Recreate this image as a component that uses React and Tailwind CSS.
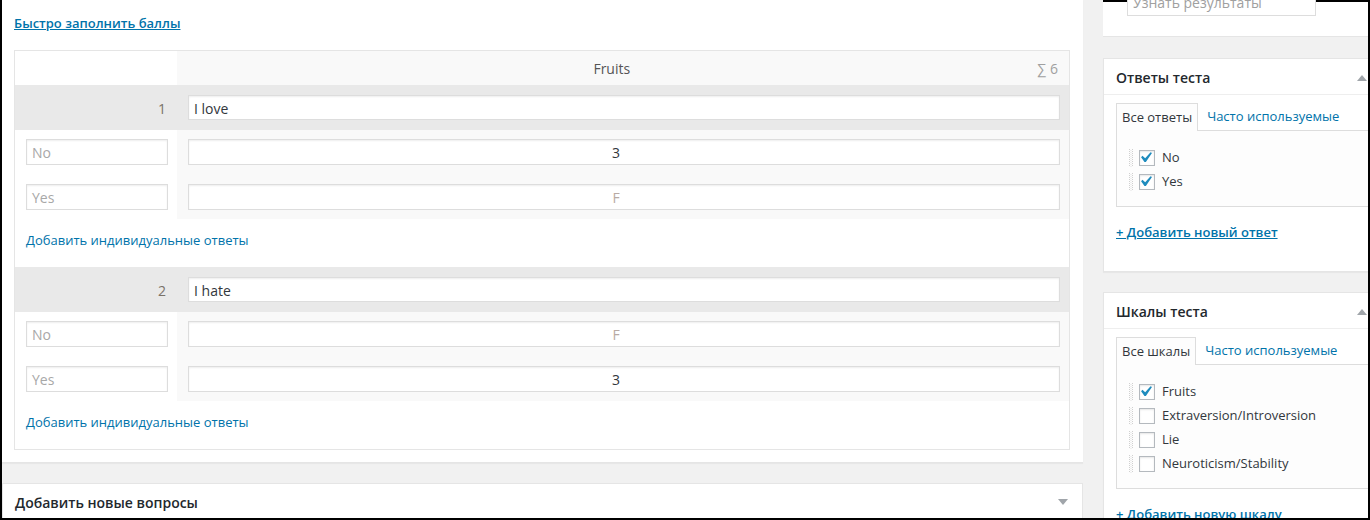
import React from "react";

const font = { fontFamily: '"Open Sans", "Noto Sans", sans-serif' };

function Check() {
  return (
    <svg width="21" height="21" viewBox="0 0 20 20" className="block shrink-0 -ml-[3px] -mt-[2px]">
      <path d="M14.83 4.89l1.34.94-5.81 8.38H9.02L5.78 9.67l1.34-1.25 2.57 2.4z" fill="#1e8cbe" />
    </svg>
  );
}

function Handle() {
  return (
    <svg width="4" height="18" viewBox="0 0 4 18" className="block shrink-0">
      {[0, 2, 4, 6, 8, 10, 12, 14, 16].map((y) => (
        <g key={y}>
          <rect x="0" y={y} width="1" height="1" fill="#d0d0d0" />
          <rect x="3" y={y} width="1" height="1" fill="#d0d0d0" />
          <rect x="1.5" y={y + 1} width="1" height="1" fill="#e2e2e2" />
        </g>
      ))}
    </svg>
  );
}

function Item({ label, checked }) {
  return (
    <div className="flex items-center h-[24px] pl-[12px]">
      <Handle />
      <div className="ml-[6px] w-[16px] h-[16px] shrink-0 border border-[#b4b9be] bg-white shadow-[inset_0_1px_2px_rgba(0,0,0,0.1)] flex items-center justify-center overflow-visible">
        {checked && <Check />}
      </div>
      <span className="ml-[7px] text-[13px] text-[#32373c]">{label}</span>
    </div>
  );
}

function Triangle({ up }) {
  return (
    <div
      className={
        up
          ? "w-0 h-0 border-l-[5px] border-r-[5px] border-b-[6px] border-l-transparent border-r-transparent border-b-[#a0a5aa]"
          : "w-0 h-0 border-l-[5px] border-r-[5px] border-t-[6px] border-l-transparent border-r-transparent border-t-[#a0a5aa]"
      }
    />
  );
}

function SidePanel({ title, tab, items, link, mt }) {
  return (
    <div className={"bg-white border border-[#e5e5e5] shadow-[0_1px_1px_rgba(0,0,0,0.04)] " + mt}>
      <div className="h-[36px] border-b border-[#eeeeee] flex items-center justify-between pl-[12px] pr-[15px] pt-[2px]">
        <span className="text-[14px] font-semibold text-[#23282d]">{title}</span>
        <Triangle up />
      </div>
      <div className="px-[12px] pt-[8px] pb-[29px]">
        <div className="flex items-end">
          <div className="relative z-10 mb-[-1px] border border-[#dddddd] border-b-0 bg-[#fdfdfd] px-[5px] pt-[4px] pb-[4px] text-[13px] leading-[19px] text-[#32373c]">
            {tab}
          </div>
          <div className="ml-[4px] px-[5px] pt-[4px] pb-[4px] text-[13px] leading-[19px] text-[#0073aa]">
            Часто используемые
          </div>
        </div>
        <div className="border border-[#dddddd] bg-[#fdfdfd] pt-[15px] pb-[12px]">
          {items.map((it) => (
            <Item key={it[0]} label={it[0]} checked={it[1]} />
          ))}
        </div>
        <div className="mt-[15px] text-[13px] leading-[20px] font-semibold text-[#0073aa] underline">
          {link}
        </div>
      </div>
    </div>
  );
}

function ValueInput({ value, faded }) {
  return (
    <div
      className={
        "h-[26px] border border-[#dddddd] bg-white shadow-[inset_0_1px_2px_rgba(0,0,0,0.07)] flex items-center justify-center pr-[16px] pt-[1px] text-[14px] " +
        (faded ? "text-[#b8aaa4]" : "text-[#32373c]")
      }
    >
      {value}
    </div>
  );
}

function LabelInput({ text }) {
  return (
    <div className="h-[26px] w-[142px] border border-[#dddddd] bg-white shadow-[inset_0_1px_2px_rgba(0,0,0,0.07)] flex items-center pl-[5px] pt-[1px] text-[14px] text-[#a8a8a8]">
      {text}
    </div>
  );
}

function Question({ n, text, answers }) {
  return (
    <div>
      <div className="flex h-[45px] bg-[#e9e9e9]">
        <div className="w-[162px] shrink-0 flex items-center justify-end pr-[11px] pt-[1px] text-[14px] text-[#7a7268]">
          {n}
        </div>
        <div className="flex-1 pl-[11px] pr-[9px] pt-[10px]">
          <div className="h-[25px] border border-[#dddddd] bg-white shadow-[inset_0_1px_2px_rgba(0,0,0,0.07)] flex items-center pl-[5px] pt-[1px] text-[14px] text-[#32373c]">
            {text}
          </div>
        </div>
      </div>
      <div className="flex">
        <div className="w-[162px] shrink-0 pl-[11px] pt-[9px] pb-[9px] flex flex-col gap-[19px] bg-white">
          {answers.map((a) => (
            <LabelInput key={a[0]} text={a[0]} />
          ))}
        </div>
        <div className="flex-1 bg-[#f9f9f9] pl-[11px] pr-[9px] pt-[9px] pb-[9px] flex flex-col gap-[19px]">
          {answers.map((a) => (
            <ValueInput key={a[0]} value={a[1]} faded={a[1] === "F"} />
          ))}
        </div>
      </div>
      <div className="pl-[11px] pt-[11px] pb-[17px] text-[13px] leading-[20px] text-[#0073aa]">
        Добавить индивидуальные ответы
      </div>
    </div>
  );
}

export default function App() {
  return (
    <div
      style={font}
      className="w-[1370px] h-[520px] overflow-hidden bg-[#f1f1f1] border-l-2 border-r-2 border-b-2 border-black flex gap-[20px]"
    >
      <div className="w-[1081px] shrink-0">
        <div className="bg-white border-b border-[#e5e5e5] shadow-[0_1px_1px_rgba(0,0,0,0.04)] pt-[13px] pl-[12px] pr-[13px] pb-[12px]">
          <div className="text-[13px] leading-[20px] font-semibold text-[#0073aa] underline">
            Быстро заполнить баллы
          </div>
          <div className="mt-[17px] border border-[#e5e5e5]">
            <div className="flex h-[34px]">
              <div className="w-[162px] shrink-0 bg-white" />
              <div className="flex-1 bg-[#f9f9f9] flex items-center pr-[11px] pt-[1px]">
                <div className="flex-1 pl-[9px] text-center text-[14px] text-[#555555]">Fruits</div>
                <div className="text-[14px] text-[#a0a0a0]">∑ 6</div>
              </div>
            </div>
            <Question n="1" text="I love" answers={[["No", "3"], ["Yes", "F"]]} />
            <Question n="2" text="I hate" answers={[["No", "F"], ["Yes", "3"]]} />
          </div>
        </div>
        <div className="mt-[20px] bg-white border border-[#e5e5e5] h-[60px]">
          <div className="h-[36px] flex items-center justify-between pl-[12px] pr-[14px]">
            <span className="text-[14px] font-semibold text-[#23282d]">Добавить новые вопросы</span>
            <Triangle />
          </div>
        </div>
      </div>
      <div className="w-[280px] shrink-0 border-t-2 border-black">
        <div className="bg-white border-b border-[#e5e5e5] h-[35px] flex items-end px-[24px] pb-[20px]">
          <div className="h-[28px] shrink-0 w-[189px] border border-[#dddddd] bg-white flex items-center pl-[5px] text-[14px] text-[#a0a0a0]">
            Узнать результаты
          </div>
        </div>
        <SidePanel
          mt="mt-[21px]"
          title="Ответы теста"
          tab="Все ответы"
          items={[["No", true], ["Yes", true]]}
          link="+ Добавить новый ответ"
        />
        <SidePanel
          mt="mt-[20px]"
          title="Шкалы теста"
          tab="Все шкалы"
          items={[
            ["Fruits", true],
            ["Extraversion/Introversion", false],
            ["Lie", false],
            ["Neuroticism/Stability", false],
          ]}
          link="+ Добавить новую шкалу"
        />
      </div>
    </div>
  );
}
